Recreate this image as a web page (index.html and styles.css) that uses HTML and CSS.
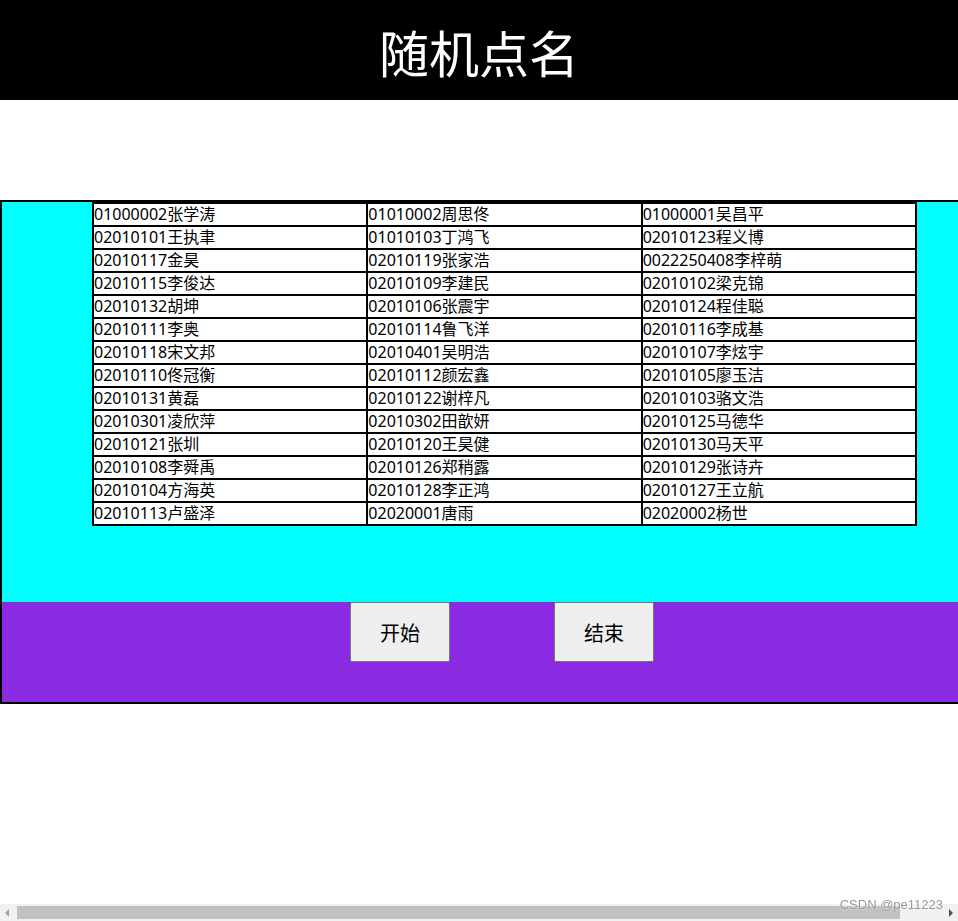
FILE: index.html
```html
<!DOCTYPE html>
<html lang="zh-CN">
<head>
<meta charset="utf-8">
<title>随机点名</title>
<link rel="stylesheet" href="styles.css">
</head>
<body>
<header class="top">
  <h1 class="title">随机点名</h1>
</header>
<div class="box">
  <div class="list">
    <table class="names">
      <tr><td>01000002张学涛</td><td>01010002周思佟</td><td>01000001吴昌平</td></tr>
      <tr><td>02010101王执聿</td><td>01010103丁鸿飞</td><td>02010123程义博</td></tr>
      <tr><td>02010117金昊</td><td>02010119张家浩</td><td>0022250408李梓萌</td></tr>
      <tr><td>02010115李俊达</td><td>02010109李建民</td><td>02010102梁克锦</td></tr>
      <tr><td>02010132胡坤</td><td>02010106张震宇</td><td>02010124程佳聪</td></tr>
      <tr><td>02010111李奥</td><td>02010114鲁飞洋</td><td>02010116李成基</td></tr>
      <tr><td>02010118宋文邦</td><td>02010401吴明浩</td><td>02010107李炫宇</td></tr>
      <tr><td>02010110佟冠衡</td><td>02010112颜宏鑫</td><td>02010105廖玉洁</td></tr>
      <tr><td>02010131黄磊</td><td>02010122谢梓凡</td><td>02010103骆文浩</td></tr>
      <tr><td>02010301凌欣萍</td><td>02010302田歆妍</td><td>02010125马德华</td></tr>
      <tr><td>02010121张圳</td><td>02010120王昊健</td><td>02010130马天平</td></tr>
      <tr><td>02010108李舜禹</td><td>02010126郑稍露</td><td>02010129张诗卉</td></tr>
      <tr><td>02010104方海英</td><td>02010128李正鸿</td><td>02010127王立航</td></tr>
      <tr><td>02010113卢盛泽</td><td>02020001唐雨</td><td>02020002杨世</td></tr>
    </table>
  </div>
  <div class="controls">
    <button class="btn">开始</button>
    <button class="btn">结束</button>
  </div>
</div>
<div class="hscroll">
  <span class="arrow arrow-left"></span>
  <span class="thumb"></span>
  <span class="arrow arrow-right"></span>
</div>
<div class="mark">CSDN @pe11223</div>
</body>
</html>
```
FILE: styles.css
```css
html, body {
  margin: 0;
  padding: 0;
}
body {
  font-family: "Noto Sans", "Noto Sans CJK SC", sans-serif;
  color: #000;
  background: #fff;
}
.top {
  height: 100px;
  background: #000;
  display: flex;
  align-items: center;
  justify-content: center;
}
.title {
  margin: 0;
  color: #fff;
  font-size: 50px;
  font-weight: normal;
  line-height: 58px;
  font-family: "Noto Sans CJK SC", sans-serif;
  padding-top: 2px;
}
.box {
  width: 1000px;
  margin-top: 100px;
  border: 2px solid #000;
}
.list {
  height: 400px;
  background: #00ffff;
  padding-left: 90px;
  box-sizing: border-box;
}
.names {
  width: 825px;
  table-layout: fixed;
  border: 1px solid #000;
  border-spacing: 0;
  background: #fff;
  font-size: 16px;
}
.names td {
  border: 1px solid #000;
  padding: 0;
  line-height: 21px;
  height: 21px;
  white-space: nowrap;
  overflow: hidden;
}
.controls {
  height: 100px;
  background: #8a2be2;
  display: flex;
  justify-content: center;
  align-items: flex-start;
  gap: 104px;
}
.btn {
  width: 100px;
  height: 60px;
  font-size: 20px;
  font-family: "Noto Sans CJK SC", sans-serif;
  background: #efefef;
  border: 1px solid #767676;
  border-radius: 2px;
  color: #000;
  padding: 0;
}
.hscroll {
  position: fixed;
  left: 0;
  right: 0;
  bottom: 0;
  height: 17px;
  background: #f1f1f1;
}
.thumb {
  position: absolute;
  left: 17px;
  top: 2px;
  width: 883px;
  height: 13px;
  background: #c1c1c1;
}
.arrow {
  position: absolute;
  top: 5px;
  width: 0;
  height: 0;
  border-top: 4px solid transparent;
  border-bottom: 4px solid transparent;
}
.arrow-left {
  left: 5px;
  border-right: 4px solid #a3a3a3;
}
.arrow-right {
  right: 5px;
  border-left: 4px solid #505050;
}
.mark {
  position: fixed;
  right: 15px;
  bottom: 9px;
  font-family: "Liberation Sans", sans-serif;
  font-size: 13px;
  color: #999;
  text-shadow: 0 0 2px #fff;
}
```
